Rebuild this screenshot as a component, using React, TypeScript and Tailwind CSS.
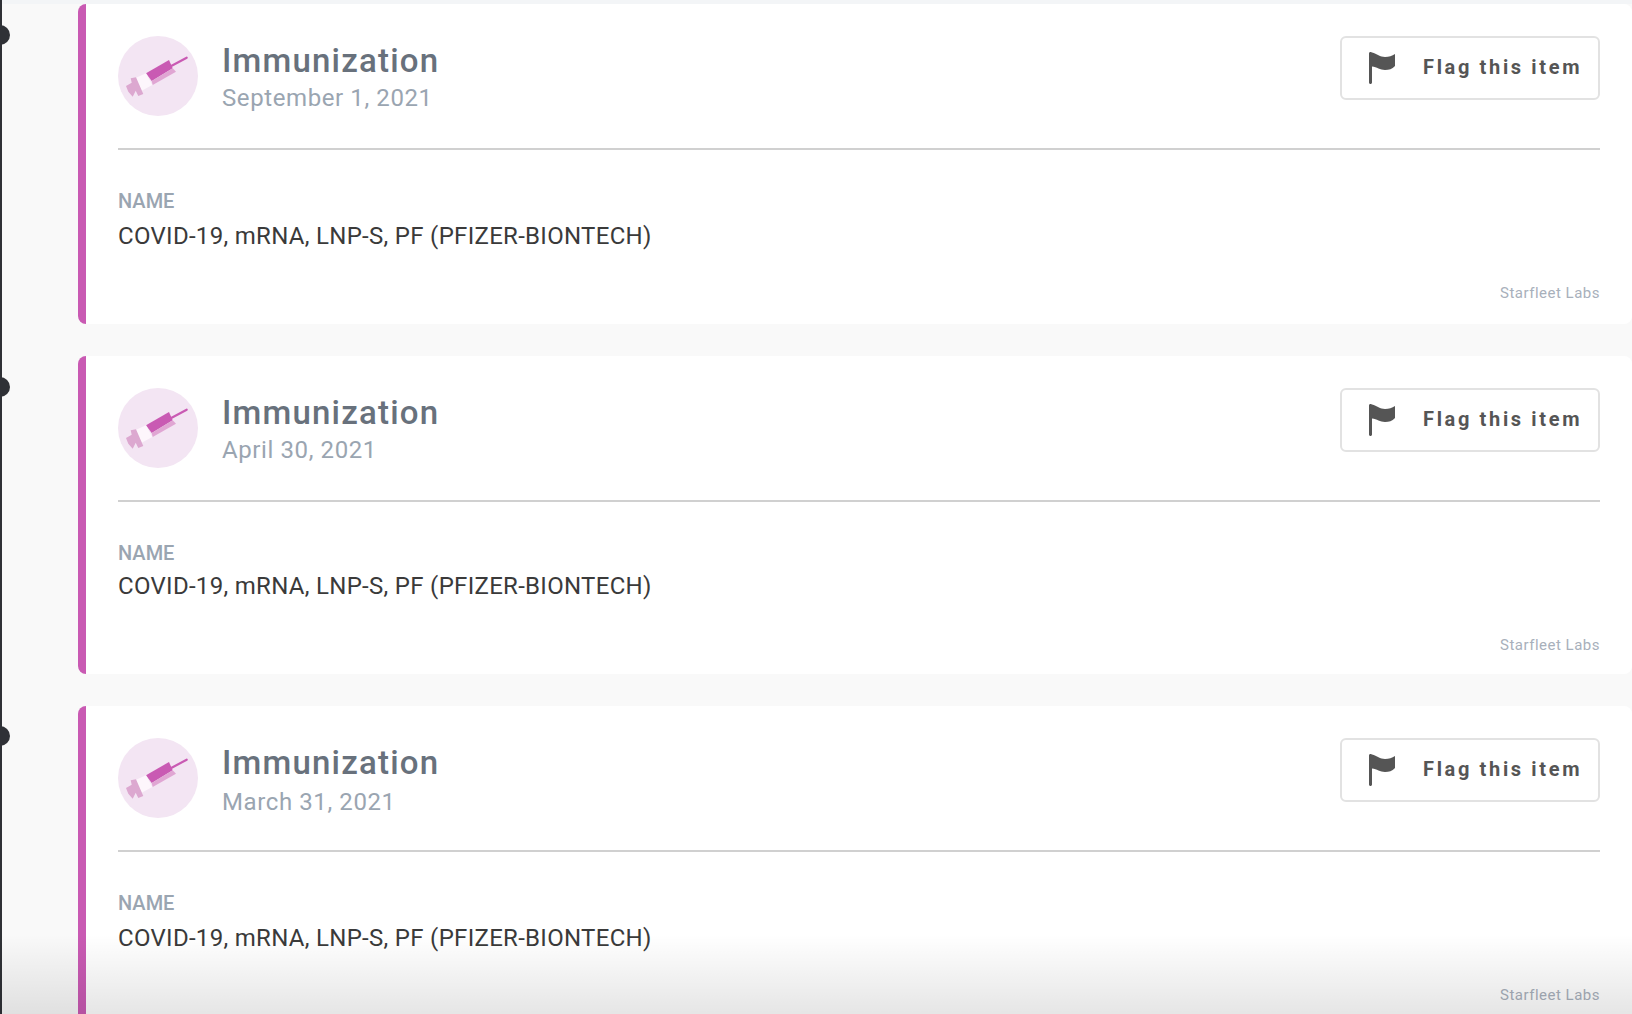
const items = [
  { date: 'September 1, 2021', dateGap: 'mt-[1px]', gap: 'mt-[8px]', foot: 'mt-[33px]', pb: 'pb-[21px]' },
  { date: 'April 30, 2021', dateGap: 'mt-[1px]', gap: 'mt-[6px]', foot: 'mt-[35px]', pb: 'pb-[19px]' },
  { date: 'March 31, 2021', dateGap: 'mt-[3px]', gap: 'mt-[8px]', foot: 'mt-[33px]', pb: 'pb-[21px]' },
];

function SyringeIcon() {
  return (
    <div className="w-20 h-20 shrink-0 rounded-full bg-[#f3e5f3]">
      <svg viewBox="0 0 80 80" className="w-20 h-20">
        <path d="M53.7 29.7L68.7 21.7" stroke="#c95ab3" strokeWidth="2.2" strokeLinecap="round" />
        <polygon points="28,37.3 51,24 54.7,32.3 33.7,45" fill="#c95ab3" />
        <polygon points="33.7,45 54.7,32.3 58,35.7 34.7,49" fill="#e0a6d3" />
        <polygon points="17,42.3 28,37.3 34.3,49 23.7,54.7" fill="#fdf6fc" />
        <polygon points="8,50 13.7,46.700 12.700,42.300 18,41.300 25.300,58 20.300,60 17.700,54.700 14.700,60.700 10.300,55.700" fill="#dca8d0" />
      </svg>
    </div>
  );
}

function FlagIcon() {
  return (
    <svg viewBox="0 0 26 32" className="w-[26px] h-8 shrink-0">
      <path d="M0 1.5C0 .7.6 0 1.4 0S3 .4 3 .6C8 2 11 5 16 5c4 0 7-1 10-3v12c-3 3-6 4-10 4-5 0-8-3-13-3.500V30.500C3 31.300 2.300 32 1.500 32S0 31.300 0 30.500z" fill="#555" />
    </svg>
  );
}

function Card({ date, dateGap, gap, foot, pb }: { date: string; dateGap: string; gap: string; foot: string; pb: string }) {
  return (
    <div className={`bg-white rounded-lg border-l-8 border-[#c95ab3] pl-[32px] pr-[32px] pt-[32px] ${pb} shrink-0`}>
      <div className="flex items-start justify-between h-[114px] border-b-2 border-[#d0d0d0]">
        <div className="flex">
          <SyringeIcon />
          <div className="ml-6 mt-[5px]">
            <div className="text-[33px] leading-[40px] font-medium text-[#68717c] tracking-[1.2px]">Immunization</div>
            <div className={`text-[24px] leading-[32px] ${dateGap} text-[#9aa5b1] tracking-[0.6px]`}>{date}</div>
          </div>
        </div>
        <button className="flex items-center w-[260px] h-[64px] border-2 border-[#e2e2e2] rounded-md pl-[27px] bg-white">
          <FlagIcon />
          <span className="ml-[28px] mb-[2px] text-[20px] font-bold text-[#555] tracking-[2.65px] whitespace-nowrap">Flag this item</span>
        </button>
      </div>
      <div className="mt-[38px] text-[20px] leading-[26px] font-medium text-[#9aa5b1]">NAME</div>
      <div className={`${gap} text-[24px] leading-[28px] text-[#3a3a3a] tracking-[0.3px]`}>COVID-19, mRNA, LNP-S, PF (PFIZER-BIONTECH)</div>
      <div className={`${foot} text-right text-[15px] leading-[20px] text-[#a8b0bb] tracking-[0.5px]`}>Starfleet Labs</div>
    </div>
  );
}

export default function App() {
  return (
    <div className="relative h-[1014px] overflow-hidden bg-[#f9f9f9] font-['Roboto',sans-serif]">
      <div className="h-1 bg-[#f3f5f7]" />
      {/* timeline */}
      <div className="absolute left-0 top-0 bottom-0 w-[2px] bg-[#2f3136]" />
      <div className="absolute left-[-10px] top-[25px] w-5 h-5 rounded-full bg-[#2f3136]" />
      <div className="absolute left-[-10px] top-[377px] w-5 h-5 rounded-full bg-[#2f3136]" />
      <div className="absolute left-[-10px] top-[726px] w-5 h-5 rounded-full bg-[#2f3136]" />

      <div className="flex flex-col gap-8 pl-[78px]">
        {items.map((item) => (
          <Card key={item.date} date={item.date} dateGap={item.dateGap} gap={item.gap} foot={item.foot} pb={item.pb} />
        ))}
      </div>

      {/* bottom fade */}
      <div className="absolute left-0 right-0 bottom-0 h-[80px] bg-gradient-to-b from-transparent to-black/10" />
    </div>
  );
}
